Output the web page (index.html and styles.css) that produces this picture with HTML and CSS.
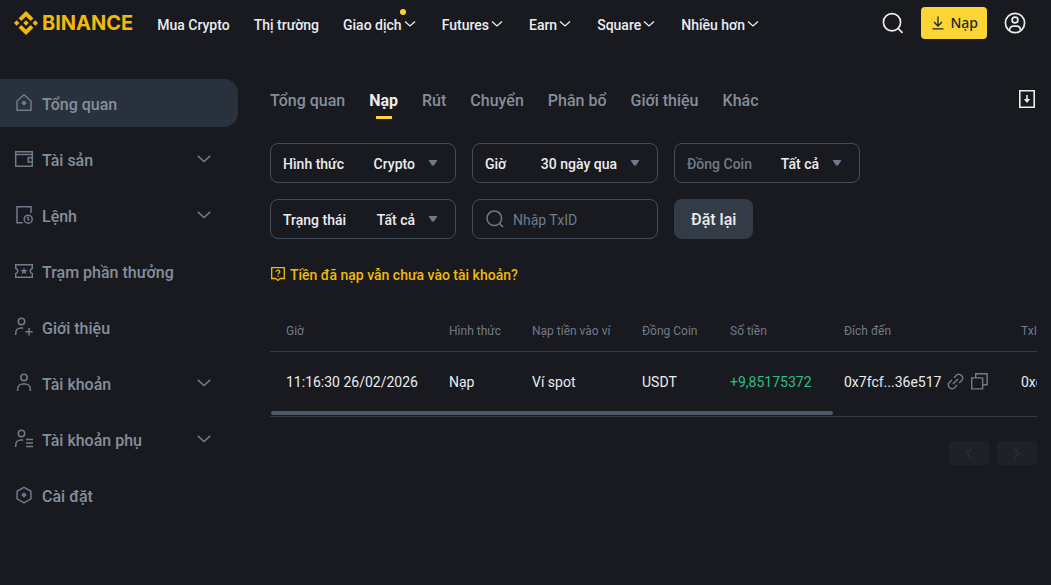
FILE: index.html
```html
<!DOCTYPE html>
<html lang="vi">
<head>
<meta charset="utf-8">
<meta name="viewport" content="width=device-width, initial-scale=1">
<title>Binance</title>
<link rel="stylesheet" href="styles.css">
</head>
<body>
<svg class="defs" aria-hidden="true">
  <symbol id="chev" viewBox="0 0 16 16"><path d="M3 5.500 8 10l5-4.500" fill="none" stroke="currentColor" stroke-width="1.300"/></symbol>
  <symbol id="caret" viewBox="0 0 16 16"><path d="M3.500 5h9L9 10.500H7z" fill="currentColor"/></symbol>
</svg>
<header class="topbar">
  <a class="logo" href="#">
    <svg class="logo-mark" viewBox="0 0 126.600 126.600" fill="currentColor" aria-hidden="true"><path d="M38.700 53.200 63.300 28.600l24.600 24.600 14.300-14.300L63.300 0 24.400 38.900zM0 63.300 14.300 49l14.300 14.300-14.300 14.300zM38.700 73.400 63.300 98l24.600-24.600 14.300 14.300-38.900 38.900-38.900-38.900zM98 63.300 112.300 49l14.300 14.300-14.300 14.300zM77.800 63.300 63.300 48.800 48.800 63.300l14.500 14.500z"/></svg>
    <span>BINANCE</span>
  </a>
  <nav class="nav">
    <a href="#">Mua Crypto</a>
    <a href="#">Thị trường</a>
    <a href="#" class="has-dot">Giao dịch<svg><use href="#chev"/></svg><i class="dot"></i></a>
    <a href="#">Futures<svg><use href="#chev"/></svg></a>
    <a href="#">Earn<svg><use href="#chev"/></svg></a>
    <a href="#">Square<svg><use href="#chev"/></svg></a>
    <a href="#">Nhiều hơn<svg><use href="#chev"/></svg></a>
  </nav>
  <div class="tools">
    <button class="icon-btn" aria-label="Tìm kiếm"><svg viewBox="0 0 24 24"><circle cx="11" cy="11.300" r="8.600"/><path d="m17.200 17.500 4.300 4.300"/></svg></button>
    <button class="deposit"><svg viewBox="0 0 16 16"><path d="M8 1.500v9M4 7l4 4 4-4M2.500 13.800h11"/></svg>Nạp</button>
    <button class="icon-btn" aria-label="Hồ sơ"><svg viewBox="0 0 24 24"><circle cx="12" cy="12" r="9.600"/><circle cx="12" cy="9" r="2.900"/><path d="M6.500 19.500c0-3 1.800-4.300 4-4.300h3c2.200 0 4 1.300 4 4.300"/></svg></button>
  </div>
</header>
<div class="layout">
  <nav class="side">
    <a href="#" class="active"><svg viewBox="0 0 20 20"><path d="M3 17.300V8l7-6.300L17 8v9.300z"/><path class="solid" d="m10 7.300 2.700 2.700-2.700 2.700L7.300 10z"/></svg>Tổng quan</a>
    <a href="#"><svg viewBox="0 0 20 20"><path d="M1.700 2.700h16.600v14.600H1.700zM1.700 5.600h16.600M18 8.700h-3.800v4.200H18"/></svg>Tài sản<svg class="end"><use href="#chev"/></svg></a>
    <a href="#"><svg viewBox="0 0 20 20"><path d="M17 8V1.700H3v16h5.800"/><circle cx="14.200" cy="14.200" r="4"/><path d="M14 11.800v2.700l1.500 1"/></svg>Lệnh<svg class="end"><use href="#chev"/></svg></a>
    <a href="#"><svg viewBox="0 0 20 20"><path d="M1.700 3.700h16.600v3.600a2.800 2.800 0 0 0 0 5.400v3.600H1.700v-3.600a2.800 2.800 0 0 0 0-5.400z"/><path class="solid" d="m10 6.600 1 2.300 2.500.2-1.900 1.600.6 2.500-2.200-1.400-2.200 1.400.6-2.500-1.900-1.600 2.500-.2z"/></svg>Trạm phần thưởng</a>
    <a href="#"><svg viewBox="0 0 20 20"><circle cx="7.500" cy="4.500" r="3.200"/><path d="M1.700 18v-1.800c0-3 2-5.300 5-5.300h2.500M15 11v7.500M11.300 14.800h7.400"/></svg>Giới thiệu</a>
    <a href="#"><svg viewBox="0 0 20 20"><circle cx="10" cy="4.500" r="3.200"/><path d="M3.700 18v-2c0-3 2.300-5 5-5h2.600c2.700 0 5 2 5 5v2"/></svg>Tài khoản<svg class="end"><use href="#chev"/></svg></a>
    <a href="#"><svg viewBox="0 0 20 20"><circle cx="7.500" cy="4.500" r="3.200"/><path d="M1.700 18v-1.800c0-3 2-5.300 5-5.300h2.500M12 10.500h7M12 14h7M12 17.500h7"/></svg>Tài khoản phụ<svg class="end"><use href="#chev"/></svg></a>
    <a href="#"><svg viewBox="0 0 20 20"><path d="m10 2.300 6.900 4v7.600l-6.900 4-6.900-4V6.300z"/><path class="solid" d="m10 7.300 2.700 2.700-2.700 2.700L7.300 10z"/></svg>Cài đặt</a>
  </nav>
  <main class="main">
    <div class="tabs-row">
      <nav class="tabs">
        <a href="#">Tổng quan</a><a href="#" class="on">Nạp</a><a href="#">Rút</a><a href="#">Chuyển</a><a href="#">Phân bổ</a><a href="#">Giới thiệu</a><a href="#">Khác</a>
      </nav>
      <button class="export" aria-label="Xuất"><svg viewBox="0 0 20 20"><path d="M2.800 1.800h14.400v16.400H2.800z"/><path d="M10 6v6"/><path class="solid" d="M6.800 10h6.400L10 14z"/></svg></button>
    </div>
    <form class="filters">
      <div class="field"><label for="f1">Hình thức</label><select id="f1"><option>Crypto</option></select><svg><use href="#caret"/></svg></div>
      <div class="field"><label for="f2">Giờ</label><select id="f2"><option>30 ngày qua</option></select><svg><use href="#caret"/></svg></div>
      <div class="field"><label for="f3" class="dim">Đồng Coin</label><select id="f3"><option>Tất cả</option></select><svg><use href="#caret"/></svg></div>
      <div class="field"><label for="f4">Trạng thái</label><select id="f4"><option>Tất cả</option></select><svg><use href="#caret"/></svg></div>
      <div class="field search"><label for="tx" aria-label="TxID"><svg viewBox="0 0 20 20"><circle cx="9.300" cy="9.300" r="7.300"/><path d="m14.500 14.500 3.500 3.500"/></svg></label><input id="tx" type="text" placeholder="Nhập TxID"></div>
      <button class="reset" type="reset">Đặt lại</button>
    </form>
    <a class="help" href="#"><svg viewBox="0 0 16 16"><path d="M1.700 1.700h12.600v10.800h-4L8 14.500l-2.300-2H1.700z"/><path d="M6.200 5.800c0-1 .8-1.600 1.800-1.600s1.800.6 1.800 1.500c0 1.200-1.700 1.300-1.700 2.700M8.100 9.400v1.400"/></svg>Tiền đã nạp vẫn chưa vào tài khoản?</a>
    <div class="table-box">
      <table>
        <colgroup><col class="c-time"><col class="c-type"><col class="c-wallet"><col class="c-coin"><col class="c-amount"><col class="c-dest"><col></colgroup>
        <thead><tr><th>Giờ</th><th>Hình thức</th><th>Nạp tiền vào ví</th><th>Đồng Coin</th><th>Số tiền</th><th>Đích đến</th><th>TxID</th></tr></thead>
        <tbody><tr><td>11:16:30 26/02/2026</td><td>Nạp</td><td>Ví spot</td><td>USDT</td><td class="plus">+9,85175372</td>
          <td><span class="addr">0x7fcf...36e517
            <button aria-label="Liên kết"><svg viewBox="0 0 20 20"><path d="M8.300 6.200 11 3.500a3.900 3.900 0 0 1 5.500 5.500l-2.700 2.700M11.700 13.800 9 16.500A3.900 3.900 0 0 1 3.500 11l2.700-2.700M7.300 12.700l5.400-5.400" /></svg></button>
            <button aria-label="Sao chép"><svg viewBox="0 0 20 20"><path d="M1.800 6.200h11.500v11.600H1.800zM6 6V1.800h12v11.700h-4.500"/></svg></button></span></td>
          <td>0xe41b</td></tr></tbody>
      </table>
      <div class="track"><div class="thumb"></div></div>
    </div>
    <div class="pager">
      <button disabled aria-label="Trang trước"><svg class="prev"><use href="#chev"/></svg></button>
      <button disabled aria-label="Trang sau"><svg class="next"><use href="#chev"/></svg></button>
    </div>
  </main>
</div>
</body>
</html>
```

FILE: styles.css
```css
* { box-sizing: border-box; }
body {
  margin: 0;
  min-height: 100vh;
  background: #191a1f;
  color: #eaecef;
  font-family: Roboto, "Noto Sans", sans-serif;
  font-size: 14px;
  line-height: 20px;
}
a { color: inherit; text-decoration: none; }
button { border: 0; padding: 0; background: none; color: inherit; font: inherit; cursor: pointer; }
svg { display: block; flex: none; fill: none; stroke: currentColor; }
.defs { position: absolute; width: 0; height: 0; }
.solid { fill: currentColor; stroke: none; }

.topbar { display: flex; align-items: center; height: 46px; padding: 0 24px 0 14px; }
.logo { display: flex; align-items: center; gap: 4px; margin-right: 24px; color: #f0b90b; font: 700 20px/24px Inter, sans-serif; }
.logo-mark { width: 24px; height: 24px; stroke: none; fill: currentColor; }
.nav { display: flex; gap: 24px; padding-top: 3px; font-weight: 500; }
.nav a { display: flex; align-items: center; white-space: nowrap; }
.nav svg { width: 16px; height: 16px; margin-bottom: 2px; stroke: none; }
.has-dot { position: relative; }
.dot { position: absolute; top: -6px; right: 12px; width: 6px; height: 6px; border-radius: 50%; background: #fcd535; }
.tools { display: flex; align-items: center; gap: 16px; margin-left: auto; }
.icon-btn svg { width: 24px; height: 24px; stroke-width: 1.700; }
.deposit { display: flex; align-items: center; gap: 4px; height: 32px; padding: 0 9px; border-radius: 4px; background: #fcd535; color: #202630; font-family: "Noto Sans", sans-serif; font-weight: 500; }
.deposit svg { width: 16px; height: 16px; stroke-width: 1.300; }

.layout { display: flex; align-items: flex-start; gap: 32px; padding-right: 14px; }
.side { display: flex; flex-direction: column; flex: none; gap: 8px; width: 238px; padding-top: 33px; color: #848e9c; font-size: 16px; font-weight: 500; }
.side a { display: flex; align-items: center; gap: 8px; height: 48px; padding: 4px 24px 0 14px; }
.side svg { width: 20px; height: 20px; margin-bottom: 4px; color: #707a8a; stroke-width: 1.500; }
.side .end { margin-left: auto; stroke: none; }
.side .active { border-radius: 0 14px 14px 0; background: #29313d; }

.main { flex: 1; min-width: 0; padding-top: 43px; }
.tabs-row { display: flex; justify-content: space-between; align-items: flex-start; }
.tabs { display: flex; gap: 24px; color: #848e9c; font-size: 16px; font-weight: 500; line-height: 24px; }
.tabs a { padding-bottom: 6px; }
.tabs .on { color: #eaecef; font-weight: 700; }
.tabs .on::after { content: ""; display: block; width: 16px; height: 3px; margin: 3px auto 0; background: #fcd535; }
.export svg { width: 20px; height: 20px; stroke-width: 1.600; }
.filters { display: flex; flex-wrap: wrap; gap: 16px; padding-top: 18px; }
.field { display: flex; align-items: center; width: 186px; height: 40px; padding: 2px 14px 0 12px; border: 1px solid #434c5a; border-radius: 8px; font-weight: 500; }
.field label { white-space: nowrap; }
.field .dim { color: #707a8a; }
.field select, .field input { flex: 1; min-width: 0; width: 0; padding: 0; border: 0; outline: 0; background: none; color: inherit; font: inherit; appearance: none; }
.field select { margin-right: 10px; text-align-last: right; }
.field > svg { width: 16px; height: 16px; margin-bottom: 3px; color: #707a8a; stroke: none; }
.search { gap: 8px; color: #707a8a; }
.search svg { width: 20px; height: 20px; margin-bottom: 2px; stroke-width: 1.500; }
.search input { font-weight: 400; }
.search input::placeholder { color: #707a8a; opacity: 1; }
.reset { height: 40px; padding: 2px 17px 0; border-radius: 8px; background: #333b47; font-size: 16px; font-weight: 500; }
.help { display: flex; align-items: center; gap: 4px; width: fit-content; margin-top: 26px; color: #f0b90b; font-weight: 500; }
.help svg { width: 16px; height: 16px; margin-bottom: 3px; stroke-width: 1.300; }

.table-box { margin-top: 24px; overflow: hidden; border-bottom: 1px solid #333b47; }
table { width: 1044px; table-layout: fixed; border-collapse: collapse; }
.c-time { width: 163px; }
.c-type { width: 83px; }
.c-wallet { width: 110px; }
.c-coin { width: 88px; }
.c-amount { width: 114px; }
.c-dest { width: 177px; }
th, td { padding: 2px 0 0 16px; text-align: left; white-space: nowrap; }
th { height: 42px; border-bottom: 1px solid #333b47; color: #707a8a; font-size: 12px; font-weight: 400; }
td { height: 60px; }
.plus { color: #2ebd85; }
.addr { display: flex; align-items: center; gap: 5px; }
.addr button { padding-bottom: 2px; color: #707a8a; }
.addr svg { width: 19px; height: 19px; stroke-width: 1.500; }
.track { padding: 0 1px 1px; }
.thumb { width: 73.5%; height: 4px; border-radius: 2px; background: #4f5867; }
.pager { display: flex; justify-content: flex-end; gap: 8px; margin-top: 24px; }
.pager button { display: grid; place-items: center; width: 40px; height: 24px; border-radius: 4px; background: #1e2228; color: #29303a; }
.pager svg { width: 16px; height: 16px; stroke: none; }
.prev { transform: rotate(90deg); }
.next { transform: rotate(-90deg); }
```
